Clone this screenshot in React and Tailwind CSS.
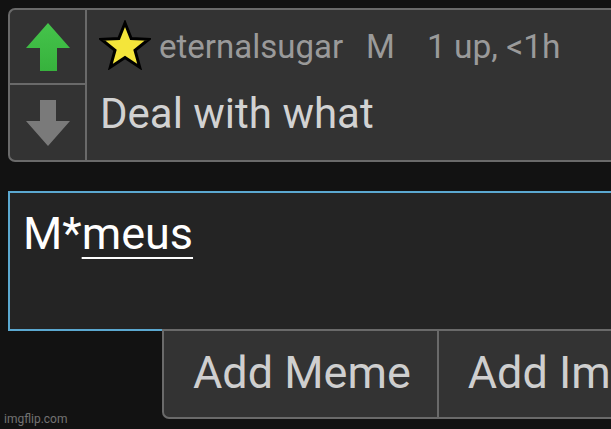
import React from "react";

function UpArrow() {
  return (
    <svg width="44" height="48" viewBox="0 0 44 48">
      <defs>
        <linearGradient id="ug" x1="0" y1="0" x2="0" y2="1">
          <stop offset="0" stopColor="#45c44b" />
          <stop offset="1" stopColor="#37b23d" />
        </linearGradient>
      </defs>
      <polygon points="22,0 44,25 31,25 31,48 14,48 14,25 0,25" fill="url(#ug)" />
    </svg>
  );
}

function DownArrow() {
  return (
    <svg width="44" height="46" viewBox="0 0 44 46">
      <polygon points="14,0 30,0 30,21 44,21 22,46 0,21 14,21" fill="#7a7a7a" />
    </svg>
  );
}

function Star() {
  return (
    <svg width="52" height="50" viewBox="0 0 52 50">
      <polygon
        points="26,3 32.2,18.5 49.8,19.3 36,30.2 40.7,47.2 26,37.5 11.3,47.2 16,30.2 2.2,19.3 19.8,18.5"
        fill="#f4e53a"
        stroke="#000"
        strokeWidth="3"
        strokeLinejoin="miter"
      />
    </svg>
  );
}

export default function App() {
  return (
    <div className="relative w-[611px] h-[429px] overflow-hidden bg-[#121212] pt-[8px] pl-[8px] font-['Roboto',sans-serif]">
      {/* comment card */}
      <div className="flex w-[640px] h-[154px] bg-[#333333] border-2 border-r-0 border-[#6a6a6a] rounded-l-[7px]">
        <div className="flex flex-col w-[77px] border-r-2 border-[#6a6a6a]">
          <div className="h-[75px] flex items-center justify-center border-b-2 border-[#6a6a6a]">
            <UpArrow />
          </div>
          <div className="flex-1 flex items-center justify-center">
            <DownArrow />
          </div>
        </div>
        <div className="flex flex-col pl-[12px] pt-[10px]">
          <div className="flex items-start">
            <Star />
            <span className="ml-[8px] mt-[10px] text-[33px] leading-none text-[#9a9a9a]">eternalsugar</span>
            <span className="ml-[23px] mt-[10px] text-[33px] leading-none text-[#9a9a9a]">M</span>
            <span className="ml-[32px] mt-[10px] text-[33.5px] leading-none text-[#9a9a9a]">1 up, &lt;1h</span>
          </div>
          <div className="mt-[23px] ml-[1px] text-[42px] leading-none text-[#d2d2d2]">Deal with what</div>
        </div>
      </div>

      {/* text area */}
      <div className="mt-[29px] w-[640px] h-[140px] bg-[#242424] border-2 border-r-0 border-[#5ba8d0] pl-[13px] pt-[18px]">
        <div className="text-[45px] leading-none text-white">
          M*<span className="underline decoration-2 underline-offset-[8px]">meus</span>
        </div>
      </div>

      {/* buttons */}
      <div className="relative -mt-[2px] ml-[154px] flex w-[500px] h-[90px] bg-[#333333] border-2 border-r-0 border-[#6a6a6a] rounded-bl-[7px]">
        <div className="pl-[29px] pr-[26px] pt-[19px] text-[45px] leading-none text-[#cfcfcf] whitespace-nowrap">Add Meme</div>
        <div className="border-l-2 border-[#6a6a6a] pl-[29px] pt-[19px] text-[45px] leading-none text-[#cfcfcf] whitespace-nowrap">Add Image</div>
      </div>

      <div className="absolute left-[4px] bottom-[4px] text-[12px] leading-none text-[#8a8a8a] opacity-80">imgflip.com</div>
    </div>
  );
}
